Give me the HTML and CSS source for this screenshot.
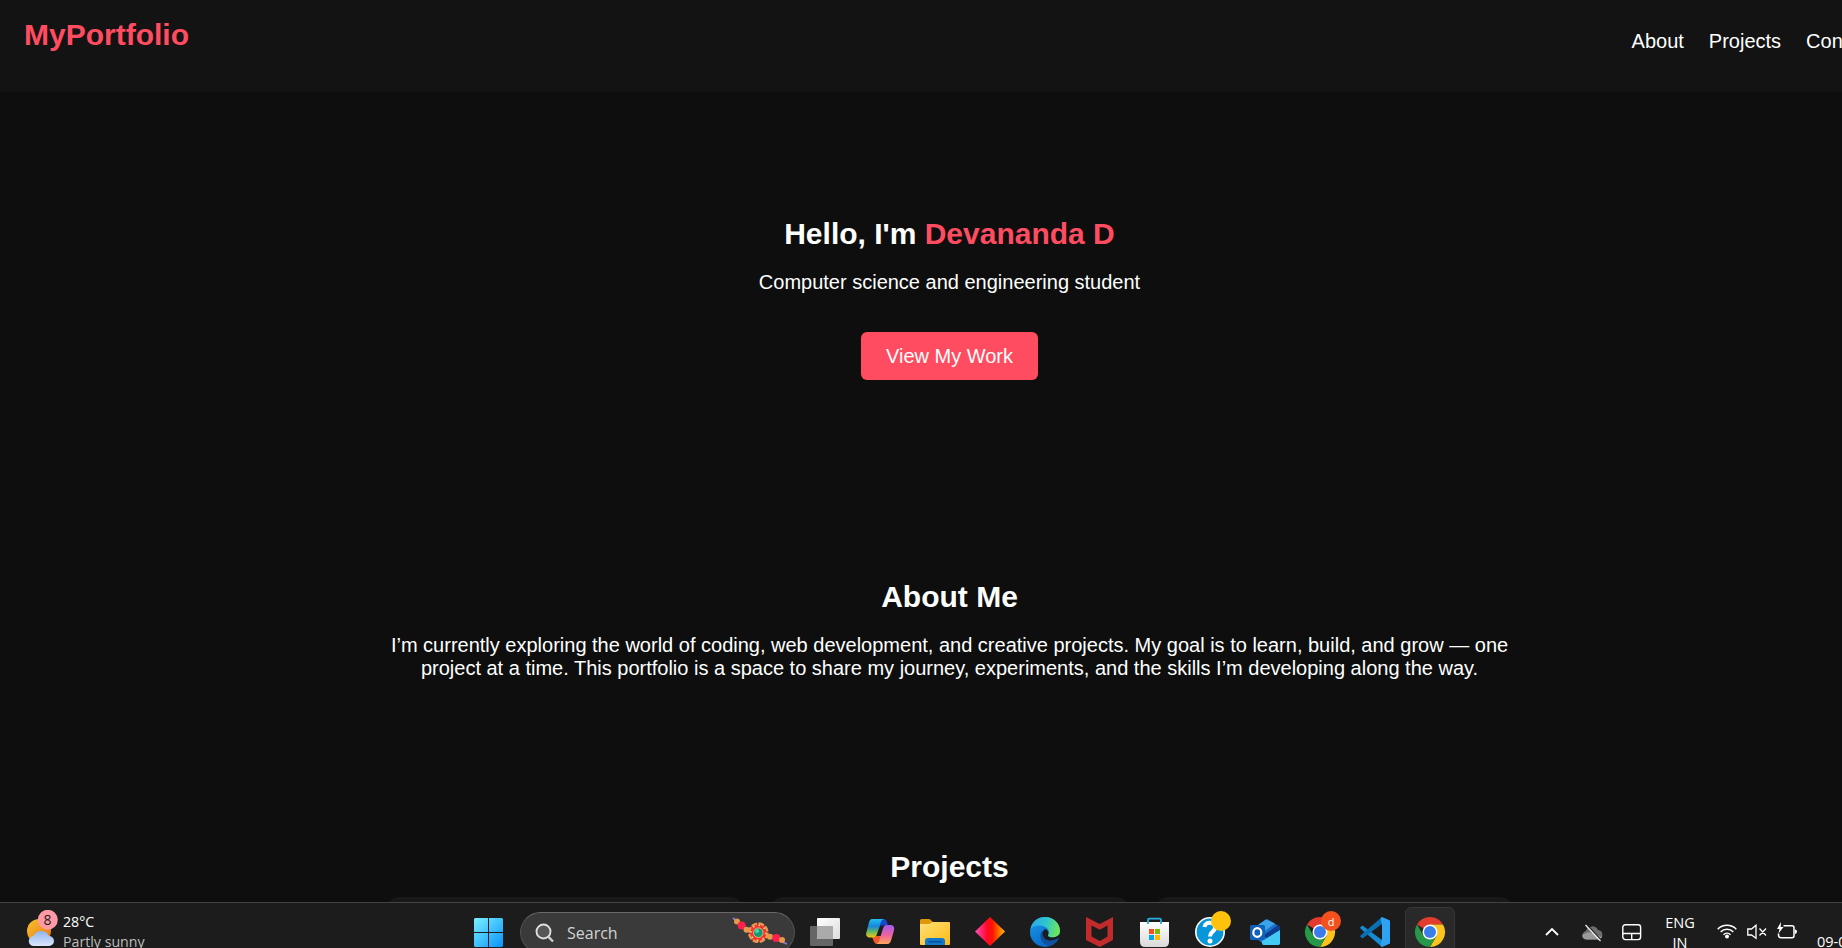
FILE: index.html
```html
<!DOCTYPE html>
<html lang="en">
<head>
<meta charset="utf-8">
<title>MyPortfolio</title>
<link rel="stylesheet" href="styles.css">
</head>
<body>
<div class="page">
  <header class="header">
    <h1 class="logo">MyPortfolio</h1>
    <nav class="nav"><a>About</a><a>Projects</a><a>Contact</a></nav>
  </header>
  <section class="hero">
    <h2 class="title">Hello, I'm <span class="accent">Devananda D</span></h2>
    <p class="text">Computer science and engineering student</p>
    <a class="button">View My Work</a>
  </section>
  <section class="about">
    <h2 class="title">About Me</h2>
    <p class="text">I’m currently exploring the world of coding, web development, and creative projects. My goal is to learn, build, and grow — one<br>project at a time. This portfolio is a space to share my journey, experiments, and the skills I’m developing along the way.</p>
  </section>
  <section class="projects">
    <h2 class="title">Projects</h2>
    <div class="cards"><div class="card"></div><div class="card"></div><div class="card"></div></div>
  </section>
</div>

<div class="taskbar">
  <svg class="weather" width="34" height="38" viewBox="26 910 34 38">
    <defs>
      <linearGradient id="sun" x1="0" y1="0" x2="1" y2="1"><stop offset="0" stop-color="#f9c22e"/><stop offset="1" stop-color="#e8730f"/></linearGradient>
      <linearGradient id="cloud" x1="0" y1="0" x2="0" y2="1"><stop offset="0" stop-color="#8fb4ee"/><stop offset="1" stop-color="#dbe7fb"/></linearGradient>
    </defs>
    <circle cx="39" cy="931" r="12" fill="url(#sun)"/>
    <path d="M34 946a5 5 0 0 1-.5-10 8.500 8.500 0 0 1 15.500 0 5 5 0 0 1 0 10z" fill="url(#cloud)"/>
    <circle cx="47.800" cy="919.800" r="10" fill="#ff99a4"/>
    <text x="47.500" y="925" class="badge-num">8</text>
  </svg>
  <div class="weather-text"><span>28°C</span><span class="dim">Partly sunny</span></div>

  <svg class="start" width="29" height="29" viewBox="0 0 29 29">
    <defs><linearGradient id="win" gradientUnits="userSpaceOnUse" x1="0" y1="0" x2="29" y2="29"><stop offset="0" stop-color="#7af0ff"/><stop offset="1" stop-color="#0a93fb"/></linearGradient></defs>
    <path d="M1 0H14V14H0V1zM15 0H28L29 1V14H15zM0 15H14V29H1L0 28zM15 15H29V28L28 29H15z" fill="url(#win)"/>
  </svg>

  <div class="search">
    <svg class="lens" width="20" height="20" viewBox="0 0 20 20"><circle cx="8.500" cy="8.500" r="7" fill="#565656" stroke="#dedede" stroke-width="1.900"/><path d="M13.500 13.800L18 18.500" stroke="#cfcfcf" stroke-width="2.400"/></svg>
    <span class="search-label">Search</span>
    <svg class="rakhi" width="56" height="32" viewBox="732 916 56 32">
      <path d="M733 918L747 930M768 936L787 944" stroke="#8a7bd0" stroke-width="1.800"/>
      <circle cx="737" cy="921.500" r="3" fill="#e59a4c"/><circle cx="741.700" cy="925.500" r="4" fill="#ff1f4b"/><circle cx="746.500" cy="929.700" r="3" fill="#e59a4c"/>
      <circle cx="770" cy="936.700" r="3" fill="#e59a4c"/><circle cx="776.300" cy="938" r="4" fill="#ff1f4b"/><circle cx="782" cy="940" r="3" fill="#e59a4c"/>
      <circle cx="758.300" cy="932.700" r="9.300" fill="#ef3636" stroke="#e99a50" stroke-width="2.200" stroke-dasharray="5.700 1.600"/>
      <circle cx="758.300" cy="932.700" r="7.500" fill="none" stroke="#ffd37c" stroke-width="1.600" stroke-dasharray="1.600 4.290"/>
      <circle cx="758.300" cy="932.700" r="4.800" fill="#129a77" stroke="#f2ad5c"/>
      <circle cx="757" cy="931" r="2" fill="#4fd4ad"/>
    </svg>
  </div>

  <div class="apps">
    <svg class="app" viewBox="0 0 30 30">
      <defs><linearGradient id="tv" x1="0" y1="0" x2="1" y2="1"><stop offset="0" stop-color="#fff"/><stop offset="1" stop-color="#dcdcdc"/></linearGradient></defs>
      <rect x="0" y="9" width="23" height="20" rx="1" fill="#666"/><rect x="7" y="1" width="23" height="21" rx="1" fill="url(#tv)"/><path d="M7 9H23V22H8L7 21z" fill="#aaa"/>
    </svg>
    <svg class="app" viewBox="0 0 30 30">
      <defs>
        <linearGradient id="cpa" x1="0" y1="0" x2="0" y2="1"><stop offset="0" stop-color="#22bdf0"/><stop offset=".4" stop-color="#1686d8"/><stop offset=".7" stop-color="#6bb95a"/><stop offset="1" stop-color="#f3c514"/></linearGradient>
        <linearGradient id="cpb" x1="0" y1="0" x2="0" y2="1"><stop offset="0" stop-color="#a35af0"/><stop offset=".55" stop-color="#ee659a"/><stop offset="1" stop-color="#ffa65c"/></linearGradient>
      </defs>
      <path d="M13 2H18.500C21 2 22 4 23 8.500H20C18 8.500 17.500 11 16 15H12z" fill="#1848cf"/>
      <path d="M6.500 19.500H10.500C12.500 19 13.500 16 14.500 14H18L14 26.500C13 27.300 11 27.300 9.800 26 8.600 25 8 21 6.500 19.500z" fill="#ee5a2b"/>
      <path d="M13 13L15.500 8.500H20.500L17 19H11.500z" fill="#1c1c1c"/>
      <path d="M7 2H19C16.500 2.500 15.800 5 15 8L12 17C11.200 19.500 10 20.500 7.500 20.500H5C1.500 20.500 .5 18 1.500 15L3.800 6C4.500 3.500 5.500 2 7 2z" fill="url(#cpa)"/>
      <path d="M22 8H25.500C29 8 29.800 10.500 28.800 14L26.500 22C25.500 25.500 24.500 27 22.500 27H11C13.500 26.500 14.300 24 15 21L18 11.500C18.700 9 20 8 22 8z" fill="url(#cpb)"/>
    </svg>
    <svg class="app" viewBox="0 0 30 30">
      <defs><linearGradient id="fold" x1="0" y1="0" x2="1" y2="1"><stop offset="0" stop-color="#ffdf76"/><stop offset="1" stop-color="#fdbb16"/></linearGradient></defs>
      <path d="M0 3.500Q0 2 1.500 2H9.500L13 5V11H0z" fill="#de9708"/><path d="M0 7H9L13 5H29Q30 5 30 6V27Q30 28 29 28H1Q0 28 0 27z" fill="url(#fold)"/><path d="M5 28V24Q5 21 8 21H22Q25 21 25 24V28z" fill="#1079cc"/><path d="M8.500 24.800H21.500" stroke="#07448b" stroke-width="1.200"/>
    </svg>
    <svg class="app" viewBox="0 0 30 30">
      <defs><linearGradient id="dia"><stop offset="0" stop-color="#ff4fc0"/><stop offset=".4" stop-color="#ff0828"/><stop offset=".58" stop-color="#ff1300"/><stop offset="1" stop-color="#ffbf00"/></linearGradient></defs>
      <path d="M15 0L30 14.500 15 29 0 14.500z" fill="url(#dia)"/>
    </svg>
    <svg class="app" viewBox="0 0 30 30">
      <defs>
        <linearGradient id="edg" x1="0" y1=".3" x2="1" y2=".5"><stop offset="0" stop-color="#29a9ed"/><stop offset=".5" stop-color="#2fc5cf"/><stop offset="1" stop-color="#70e851"/></linearGradient>
        <linearGradient id="edb" x1="0" y1="0" x2=".5" y2="1"><stop offset="0" stop-color="#1b9bea"/><stop offset="1" stop-color="#0869c9"/></linearGradient>
      </defs>
      <circle cx="15" cy="15" r="15" fill="url(#edb)"/>
      <path d="M12 14C8 20 12 28 20 29 24 27.500 27 25 28.500 22 23 25 16 23 15.500 17z" fill="#124f9d"/>
      <path d="M.5 12C2 4 8 0 15 0 24 0 30 6.500 30 13.500 30 18 27 20.500 23 20.500 20 20.500 17.500 19.500 18 18 21 14 16.500 8.500 10 8.500 5 8.500 1.500 10.500.5 12z" fill="url(#edg)"/>
      <path d="M15 12C11.500 14 12 20 16 22.500 21 25 26 22.500 28.500 21.300L30 19.500V17C26 21.500 17 21.500 18 18 19.500 15.500 17.500 12.500 15 12z" fill="#191d22"/>
    </svg>
    <svg class="app" viewBox="0 0 30 30"><path d="M1 0L14.800 7 28 0V23L14.800 30 1 23zM6.500 8.500V19.500L14.800 24 22.500 19.500V8.500L14.800 12.800z" fill="#c22b2b" fill-rule="evenodd"/></svg>
    <svg class="app" viewBox="0 0 30 30">
      <defs><linearGradient id="bag" x1="0" y1="0" x2="0" y2="1"><stop offset="0" stop-color="#fff"/><stop offset="1" stop-color="#d9d9d9"/></linearGradient></defs>
      <path d="M0 5H29V25Q29 30 24 30H5Q0 30 0 25z" fill="url(#bag)"/><path d="M8 7V3Q8 1.700 9.500 1.700H19.500Q21 1.700 21 3V7" fill="none" stroke="#27aee5" stroke-width="1.800"/>
      <path d="M9 12h5v5H9z" fill="#f25022"/><path d="M15 12h5v5h-5z" fill="#7fba00"/><path d="M9 18h5v5H9z" fill="#00a4ef"/><path d="M15 18h5v5h-5z" fill="#ffb900"/>
    </svg>
    <svg class="app" viewBox="0 0 30 30"><circle cx="15" cy="15" r="14.200" fill="#0796d8" stroke="#fff" stroke-width="1.600"/><path d="M9.500 10C10 3.800 20.500 4.500 20 11 19.700 14.500 15 15 15 19.500" fill="none" stroke="#fff" stroke-width="4"/><circle cx="15" cy="24" r="2.500" fill="#fff"/><circle cx="26" cy="4" r="10" fill="#ffc20c"/></svg>
    <svg class="app" viewBox="0 0 30 30">
      <path d="M5 10L15 3Q17 1.500 19 3L30 10V26Q30 28 28 28H14Q12 28 12 26L5 20z" fill="#1c71c8"/><path d="M8 8L16 2.500 25 6.500 12 16z" fill="#3aa3ea"/><path d="M14 18L28 8 30 10V16L18 24z" fill="#0d3c8c"/><path d="M12 24L30 13V26Q30 28 28 28H14Q12 28 12 26z" fill="#42caf4"/>
      <rect x="0" y="8" width="15" height="15" rx="1.500" fill="#0f60b8"/><ellipse cx="7.300" cy="15.500" rx="4" ry="4.400" fill="none" stroke="#fff" stroke-width="2.200"/>
    </svg>
    <svg class="app" viewBox="0 0 30 30">
      <g id="chrome"><path d="M15 15L2 7.500A15 15 0 0 1 28 7.500H15z" fill="#e33b2e"/><path d="M15 7.500H28A15 15 0 0 1 15 30L21.500 18.700z" fill="#fcc31e"/><path d="M2 7.500L8.500 18.800 21.500 18.700 15 30A15 15 0 0 1 2 7.500z" fill="#279847"/><circle cx="15" cy="15" r="7.500" fill="#fff"/><circle cx="15" cy="15" r="6" fill="#3b7ced"/></g>
      <circle cx="26" cy="4" r="10" fill="#f4511e"/><text x="26" y="8.500" class="badge-d">d</text>
    </svg>
    <svg class="app" viewBox="0 0 30 30"><path d="M0 10.500L2.500 8.500 22 23V30L1 12z" fill="#168bd2"/><path d="M0 19.500L2.500 21.500 22 7V0L1 18z" fill="#0b6fb4"/><path d="M22 0L30 3.500V26.500L22 30 20.500 28.500 22 22V8L20.500 1.500z" fill="#2da3f2"/></svg>
    <div class="active"><svg class="app" viewBox="0 0 30 30"><use href="#chrome"/></svg></div>
  </div>

  <svg class="chevron" width="14" height="9" viewBox="0 0 14 9"><path d="M1 8L7 2 13 8" fill="none" stroke="#fff" stroke-width="1.800"/></svg>
  <svg class="cloud-off" width="21" height="18" viewBox="0 0 21 18"><path d="M4.500 15.500A4.500 4.500 0 0 1 4 6.800 6.500 6.500 0 0 1 16 6 4.800 4.800 0 0 1 16.500 15.500z" fill="#6e6e6e"/><path d="M4 15.500Q0 15 .3 10.500L7 8 20 13Q19 15.500 16 15.500z" fill="#9a9a9a"/><path d="M4.500 .5L19.500 16.500" stroke="#1c1c1c" stroke-width="1.400"/><path d="M3.500 1L18.500 17" stroke="#eee" stroke-width="1.300"/></svg>
  <svg class="touchpad" width="20" height="17" viewBox="0 0 20 17"><rect x=".8" y=".8" width="17.800" height="14.800" rx="2.500" fill="none" stroke="#fff" stroke-width="1.400"/><path d="M1 9.500H18.500M9.700 9.500V15.500" stroke="#fff" stroke-width="1.400"/></svg>
  <div class="lang"><span>ENG</span><span>IN</span></div>
  <svg class="wifi" width="20" height="16" viewBox="0 0 20 16"><g fill="none" stroke="#fff" stroke-width="1.500"><path d="M.7 6.200A13 13 0 0 1 19.300 6.200"/><path d="M3.700 8.900A9 9 0 0 1 16.300 8.900"/><path d="M6.500 11.700A5 5 0 0 1 13.500 11.700"/></g><circle cx="10" cy="13.400" r="2" fill="#fff"/></svg>
  <svg class="mute" width="20" height="16" viewBox="0 0 20 16"><path d="M.8 5H4.500L9 1.200V14.300L4.500 11H.8zM12.500 4.500L19 11.500M19 4.500L12.500 11.500" fill="none" stroke="#fff" stroke-width="1.300"/></svg>
  <svg class="battery" width="21" height="18" viewBox="0 0 21 18"><path d="M6.500 3.700H15Q17 3.700 17 5.700V13.700Q17 15.700 15 15.700H4Q1.500 15.700 1.500 13V11.500" fill="none" stroke="#fff" stroke-width="1.500"/><path d="M18 7.500Q20 7.500 20 9.500T18 12z" fill="#fff"/><path d="M4 0L0 7H2.500L1.500 11.500 6.500 5H3.700z" fill="#fff"/></svg>
  <div class="clock">09-08-2025</div>
</div>
</body>
</html>
```
FILE: styles.css
```css
* { box-sizing: border-box; margin: 0; padding: 0; }
html, body { width: 1842px; height: 948px; overflow: hidden; }
body { background: #0e0e0e; color: #fff; font: 20px/23px "Liberation Sans", Arial, sans-serif; }
.page { width: 1899px; height: 948px; overflow: hidden; }
.header { display: flex; justify-content: space-between; height: 92px; padding: 18px 24px 0; background: #131313; }
.logo { font-size: 30px; line-height: 34px; color: #ff4c60; }
.nav { display: flex; gap: 25px; padding-top: 12px; }
.title { font-size: 30px; line-height: 34px; }
.accent { color: #ff4c60; }
.text { margin-top: 20px; white-space: nowrap; }
.hero { display: flex; flex-direction: column; align-items: center; height: 363px; padding-top: 125px; }
.button { margin-top: 38px; padding: 13px 25px 12px; border-radius: 6px; background: #ff4c60; }
.about { height: 270px; padding-top: 125px; text-align: center; }
.projects { padding-top: 125px; text-align: center; }
.cards { display: grid; grid-template-columns: repeat(3, 1fr); gap: 28px; width: 1125px; margin: 13px auto 0; }
.card { height: 200px; border-radius: 12px; background: #181818; }

.taskbar { position: fixed; left: 0; top: 902px; display: flex; align-items: flex-start; width: 1842px; height: 46px; padding-top: 14px; overflow: hidden; border-top: 1px solid #444; background: #1c1c1c; font: 14.500px/20px "Open Sans", "Noto Sans", sans-serif; }
.taskbar svg { flex: none; display: block; }
.weather { margin: -7px 0 0 26px; }
.badge-num { font-size: 14px; text-anchor: middle; fill: #222; }
.badge-d { font-size: 11px; text-anchor: middle; fill: #fff; }
.weather-text { display: flex; flex-direction: column; flex: none; width: 120px; margin: -5px 0 0 3px; font-size: 14.200px; white-space: nowrap; }
.dim { color: #bdbdbd; }
.start { margin: 1px 0 0 291px; }
.search { display: flex; flex: none; width: 275px; height: 41px; margin: -5px 0 0 17px; border: 1px solid #515151; border-top-color: #686868; border-radius: 21px; background: #3a3a3a; }
.lens { margin: 10px 0 0 14px; }
.search-label { width: 165px; margin: 10px 0 0 12px; font-size: 16px; color: #d2d2d2; }
.rakhi { margin-top: 3px; }
.apps { display: flex; flex: none; gap: 25px; margin-left: 15px; }
.app { width: 30px; height: 30px; overflow: visible; }
.active { width: 50px; height: 50px; margin: -10px -10px 0; padding: 9px; border: 1px solid #363636; border-radius: 6px; background: #292929; }
.chevron { margin: 10px 0 0 100px; }
.cloud-off { margin: 7px 0 0 23px; }
.touchpad { margin: 7px 0 0 19px; }
.lang { display: flex; flex-direction: column; flex: none; align-items: center; width: 40px; margin: -4px 0 0 18px; font-size: 14.500px; }
.wifi { margin: 6px 0 0 17px; }
.mute { margin: 7px 0 0 10px; }
.battery { margin: 5px 0 0 10px; }
.clock { flex: none; margin: 15px 0 0 19px; font-size: 14.500px; white-space: nowrap; }
```
